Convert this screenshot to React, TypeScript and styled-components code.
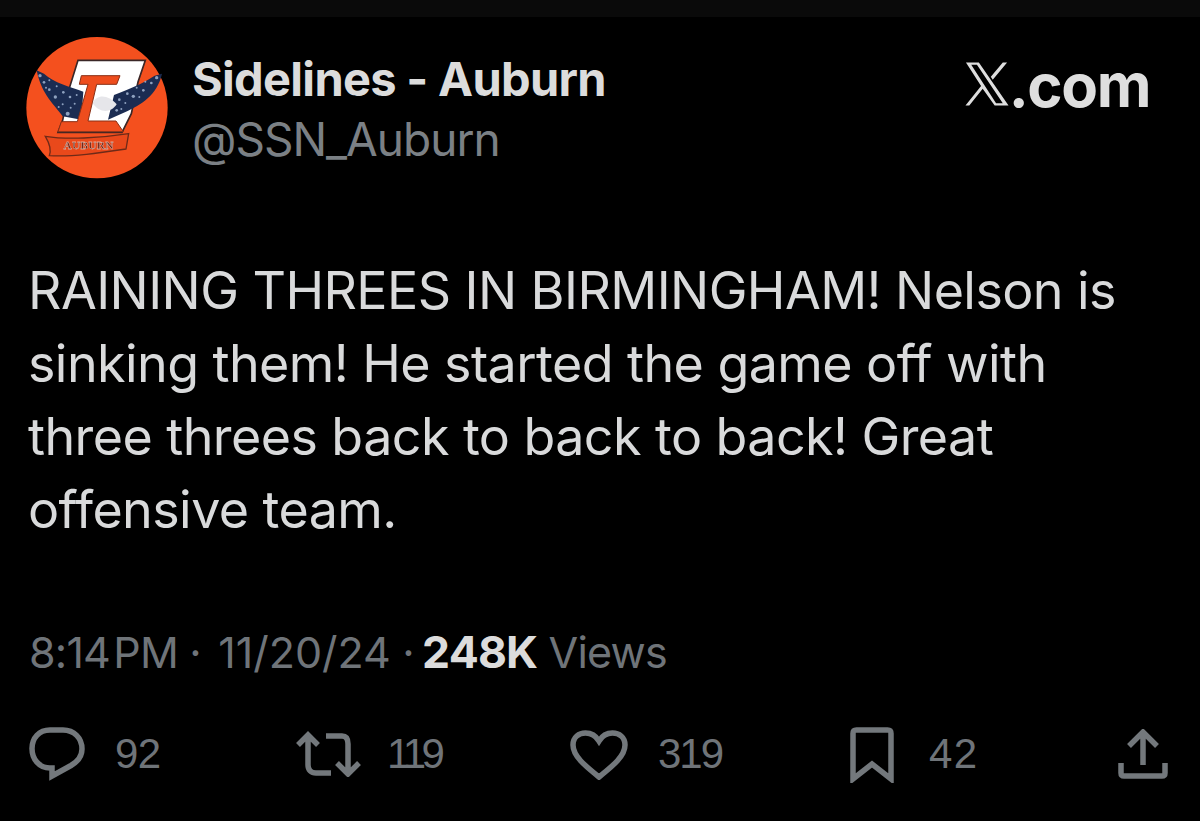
import React from "react";
import styled, { createGlobalStyle } from "styled-components";

const Global = createGlobalStyle`
  html, body { margin: 0; padding: 0; background: #000; }
  body { font-family: Inter, "Liberation Sans", sans-serif; }
`;

const Page = styled.main`
  width: 1200px;
  height: 821px;
  background: #000;
  overflow: hidden;
`;
const TopStrip = styled.div`
  height: 17px;
  background: #0a0a0a;
`;
const Header = styled.header`
  display: flex;
  align-items: flex-start;
  padding: 20px 50px 0 26px;
`;
const AvatarWrap = styled.div`
  width: 142px;
  height: 142px;
  flex: none;
`;
const Names = styled.div`
  flex: 1;
  padding: 17px 0 0 24px;
`;
const DisplayName = styled.div`
  font-size: 47px;
  line-height: 50px;
  font-weight: 700;
  letter-spacing: -0.7px;
  color: #dcdcdc;
`;
const Handle = styled.div`
  font-size: 46px;
  line-height: 50px;
  font-weight: 400;
  letter-spacing: -1px;
  color: #7b8085;
  margin-top: 10px;
`;
const Brand = styled.div`
  display: flex;
  align-items: flex-end;
  padding-top: 19px;
`;
const BrandText = styled.span`
  font-size: 60px;
  line-height: 58px;
  font-weight: 700;
  letter-spacing: -1.4px;
  color: #dedede;
`;
const XMark = styled.svg`
  width: 44px;
  height: 46px;
  margin-bottom: 7px;
  flex: none;
`;
const Tweet = styled.p`
  margin: 75px 0 0;
  padding: 0 28px;
  font-size: 52px;
  line-height: 73px;
  font-weight: 400;
  letter-spacing: -0.58px;
  color: #d9dadb;
  white-space: pre-line;
`;
const Meta = styled.div`
  margin-top: 81px;
  padding-left: 29px;
  font-size: 43px;
  line-height: 50px;
  letter-spacing: -0.8px;
  color: #6f7479;
  white-space: pre;
`;
const Time = styled.span`
  word-spacing: -8px;
`;
const Sep = styled.span<{ $after: number }>`
  margin-right: ${(p) => p.$after}px;
`;
const DateText = styled.span`
  letter-spacing: 0;
`;
const Strong = styled.strong`
  font-size: 44.5px;
  font-weight: 700;
  color: #dcdcdc;
`;
const Actions = styled.div`
  display: grid;
  grid-template-columns: 267px 274px 280px 268px auto;
  padding: 47px 0 0 29px;
`;
const Action = styled.div`
  display: flex;
  align-items: center;
  height: 60px;
`;
const Count = styled.span<{ $gap: number; $track?: number }>`
  margin-left: ${(p) => p.$gap}px;
  font-family: "Liberation Sans", Arial, sans-serif;
  font-size: 42px;
  line-height: 50px;
  letter-spacing: ${(p) => p.$track ?? -0.6}px;
  color: #6f7479;
`;
const Icon = styled.svg<{ $w: number; $h: number; $drop?: number }>`
  width: ${(p) => p.$w}px;
  height: ${(p) => p.$h}px;
  margin-top: ${(p) => p.$drop ?? 0}px;
  flex: none;
  fill: none;
  stroke: #73787c;
  stroke-width: 5.5;
`;
const AvatarArt = styled.svg`
  display: block;
  filter: blur(0.6px);
`;

const speckles: [number, number, number][] = [
  [122, 226, 5], [134, 246, 4], [150, 240, 3], [150, 268, 4], [172, 258, 3], [168, 290, 5],
  [192, 276, 4], [190, 312, 3], [212, 290, 4], [205, 340, 6], [226, 310, 3], [214, 322, 3],
  [232, 284, 3], [178, 320, 3], [140, 262, 3],
  [472, 232, 5], [456, 248, 4], [438, 244, 3], [432, 270, 4], [412, 262, 3], [402, 288, 5],
  [384, 280, 4], [378, 308, 3], [360, 298, 4], [352, 330, 4], [420, 290, 3], [366, 326, 3],
];

const Avatar = () => (
  <AvatarArt width="142" height="142" viewBox="80 110 426 426" role="img" aria-label="Sidelines Auburn avatar">
    <circle cx="293" cy="322" r="212" fill="#f4501e" />
    <path d="M236 180 H438 L416 245 L396 340 L368 396 H176 L190 360 L208 270 Z" fill="#fff" stroke="#3a2626" strokeWidth="5" />
    <path d="M112 210 L134 220 C165 248 210 258 252 274 L246 358 L190 348 C168 316 126 284 112 210 Z" fill="#1b2c52" />
    <path d="M488 220 L466 226 C430 250 392 264 344 284 L326 358 L380 334 C424 314 474 284 488 220 Z" fill="#1b2c52" />
    <g fill="#8ea1bf">
      {speckles.map(([x, y, r]) => (
        <circle key={`${x}-${y}`} cx={x} cy={y} r={r} />
      ))}
    </g>
    <path d="M246 226 H362 L352 252 H292 L266 362 H350 L372 394 H176 L186 364 H234 L266 252 H240 Z" fill="#ee4d1d" stroke="#8a2f15" strokeWidth="3" />
    <path d="M280 308 C292 280 328 282 352 312 C336 338 300 340 280 308 Z" fill="#e6e6ea" />
    <path d="M138 408 C200 418 300 414 388 400 L380 446 C300 458 220 470 150 466 C156 450 150 428 138 408 Z" fill="#e9491b" stroke="#6e2a18" strokeWidth="4" />
    <text x="268" y="446" textAnchor="middle" fontFamily="Liberation Serif, serif" fontSize="34" fontWeight="700" letterSpacing="1" fill="#6f281a" stroke="#ece4e0" strokeWidth="0.8">AUBURN</text>
  </AvatarArt>
);

const XLogo = () => (
  <XMark viewBox="0 0 46 47" role="img" aria-label="X">
    <path
      fillRule="evenodd"
      fill="#dedede"
      d="M1 1 H14.500 L45.500 46 H31 L18.500 28.500 L4.500 46 H0.500 L16.800 25.500 Z M6.500 3.500 L32.500 43.500 H39.500 L12.500 3.500 Z M27 16 L39.500 1 H44 L29 19 Z"
    />
  </XMark>
);

export default function App() {
  return (
    <Page>
      <Global />
      <TopStrip />
      <Header>
        <AvatarWrap><Avatar /></AvatarWrap>
        <Names>
          <DisplayName>Sidelines - Auburn</DisplayName>
          <Handle>@SSN_Auburn</Handle>
        </Names>
        <Brand>
          <XLogo />
          <BrandText>.com</BrandText>
        </Brand>
      </Header>
      <Tweet>{"RAINING THREES IN BIRMINGHAM! Nelson is\nsinking them! He started the game off with\nthree threes back to back to back! Great\noffensive team."}</Tweet>
      <Meta>
        <Time>8:14 PM</Time>
        <Sep $after={6}> · </Sep>
        <DateText>11/20/24</DateText>
        <Sep $after={-3}> · </Sep>
        <Strong>248K</Strong> Views
      </Meta>
      <Actions>
        <Action>
          <Icon $w={56} $h={54} viewBox="0 0 56 54">
            <path d="M21 3 H34 C45 3 53 11 53 22 C53 30 48 35 42 38.500 L23 49 V41 H21 C10 41 3 32 3 21.500 C3 11 10 3 21 3 Z" />
          </Icon>
          <Count $gap={30}>92</Count>
        </Action>
        <Action>
          <Icon $w={66} $h={46} viewBox="0 0 66 46">
            <path d="M2 14 L12 4 L22 14 M12 5 V34 C12 39 15 42 20 42 H35" />
            <path d="M30 5 H46 C50 5 52 8 52 13 V42 M41 32 L52 43 L63 32" />
          </Icon>
          <Count $gap={25} $track={-4.5}>119</Count>
        </Action>
        <Action>
          <Icon $w={58} $h={50} $drop={2} viewBox="0 0 58 50">
            <path d="M29 47 C18 38 3 27 3 15 C3 7 9 3 15.500 3 C21 3 26 6 29 11 C32 6 37 3 42.500 3 C49 3 55 7 55 15 C55 27 40 38 29 47 Z" />
          </Icon>
          <Count $gap={30} $track={-2}>319</Count>
        </Action>
        <Action>
          <Icon $w={44} $h={56} $drop={2} viewBox="0 0 44 56">
            <path d="M3 52 V6.500 C3 4 4 3 6.500 3 H37.500 C40 3 41 4 41 6.500 V52 L22 37 Z" />
          </Icon>
          <Count $gap={35} $track={1.5}>42</Count>
        </Action>
        <Action>
          <Icon $w={50} $h={50} viewBox="0 0 50 50">
            <path d="M11 17 L25 3 L39 17 M25 4 V36" />
            <path d="M3 34 V44 C3 46 4 47 6 47 H44 C46 47 47 46 47 44 V34" />
          </Icon>
        </Action>
      </Actions>
    </Page>
  );
}
